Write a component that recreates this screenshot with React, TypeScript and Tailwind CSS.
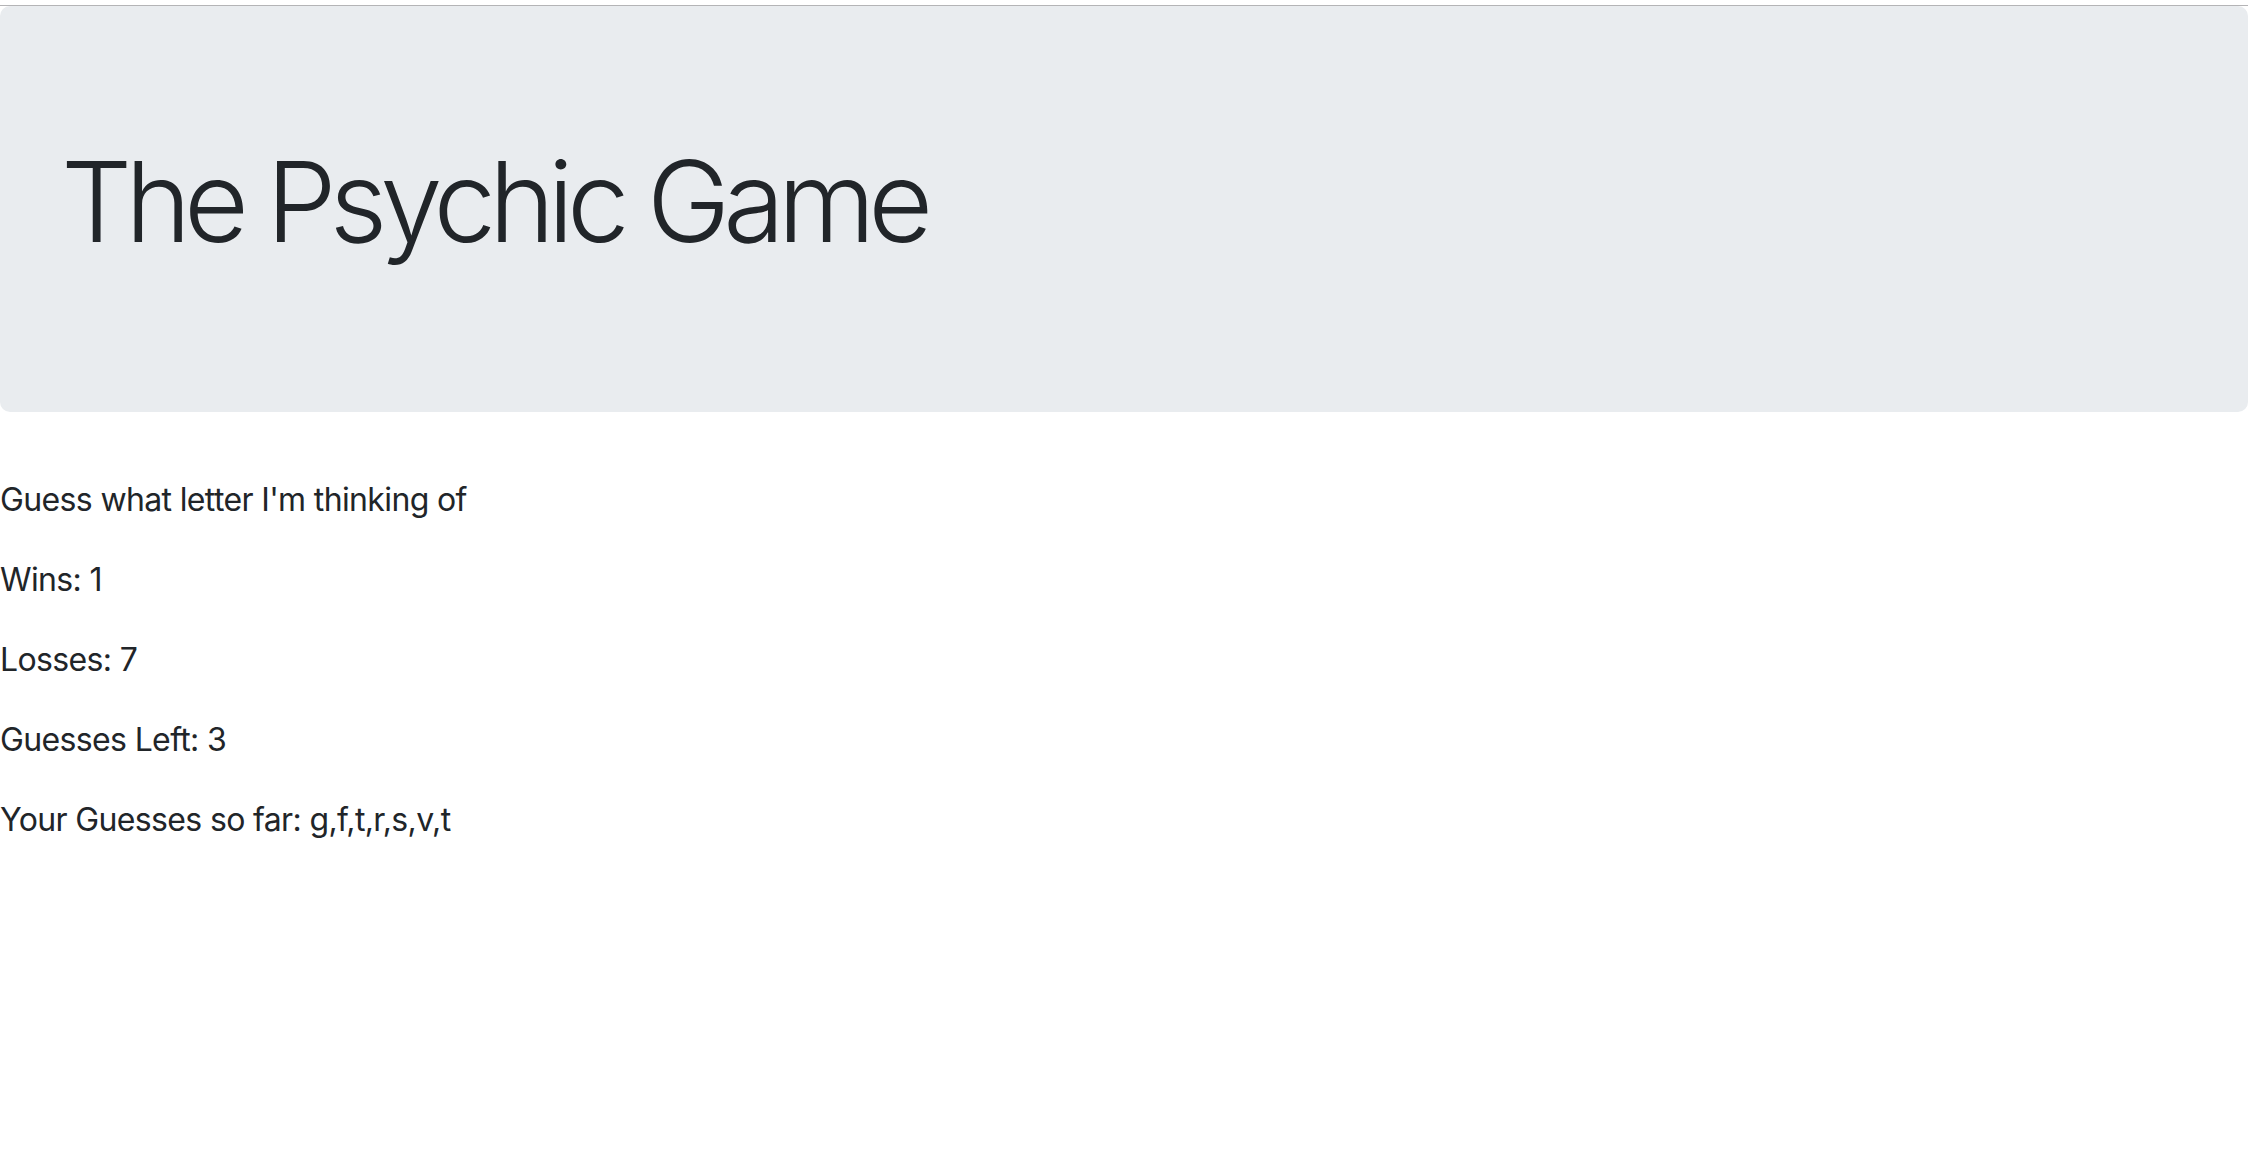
export default function App() {
  return (
    <div className="min-h-screen bg-white text-[#212529]" style={{ fontFamily: 'Inter, "Noto Sans", sans-serif' }}>
      <div className="h-[5px] bg-white" />
      <div className="h-px bg-[#b4b4b6]" />
      <div className="mb-[64px] rounded-[10px] bg-[#e9ecef] px-[64px] py-[128px]">
        <h1 className="-ml-[3px] mb-[16px] text-[112px] font-light leading-[1.2] tracking-[-0.063em]">The Psychic Game</h1>
      </div>
      <div className="text-[32px] leading-[1.5] tracking-[-0.02em]">
        <p className="mb-[32px]">Guess what letter I'm thinking of</p>
        <p className="mb-[32px]">Wins: 1</p>
        <p className="mb-[32px]">Losses: 7</p>
        <p className="mb-[32px]">Guesses Left: 3</p>
        <p className="mb-[32px]">Your Guesses so far: g,f,t,r,s,v,t</p>
      </div>
    </div>
  );
}
